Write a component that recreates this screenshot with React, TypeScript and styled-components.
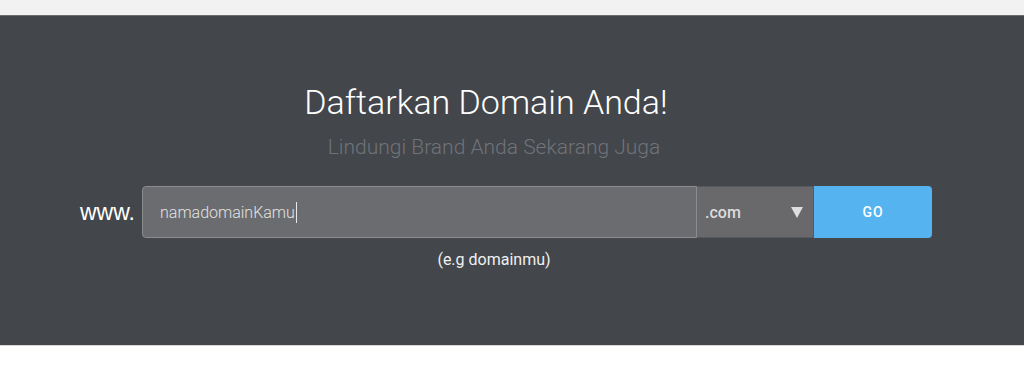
import React from 'react'
import styled, { createGlobalStyle } from 'styled-components'

const GlobalStyle = createGlobalStyle`
  html, body {
    margin: 0;
    padding: 0;
    background: #ffffff;
    font-family: Roboto, "Liberation Sans", sans-serif;
  }
`

const TopBar = styled.div`
  height: 15px;
  background: #f2f2f2;
  border-bottom: 1px solid #6a6b6e;
`

const Hero = styled.section`
  background: #43464b;
  height: 330px;
  border-bottom: 1px solid #d8d8d8;
  box-sizing: border-box;
  padding-top: 64px;
`

const Content = styled.div`
  width: 988px;
  display: flex;
  flex-direction: column;
  align-items: center;
`

const Title = styled.h1`
  margin: 0 16px 0 0;
  font-family: Roboto, "Liberation Sans", sans-serif;
  font-weight: 300;
  font-size: 34px;
  line-height: 44px;
  color: #ffffff;
`

const Subtitle = styled.p`
  margin: 10px 0 0;
  font-family: Roboto, "Liberation Sans", sans-serif;
  font-weight: 300;
  font-size: 21px;
  line-height: 26px;
  color: #707378;
`

const FormRow = styled.div`
  align-self: flex-start;
  margin: 26px 0 0 80px;
  display: flex;
  align-items: center;
`

const Prefix = styled.span`
  width: 62px;
  font-family: "Liberation Sans", sans-serif;
  font-size: 23px;
  color: #ffffff;
`

const Field = styled.div`
  width: 555px;
  height: 52px;
  box-sizing: border-box;
  background: #6b6c6f;
  border: 1px solid #8b8c8f;
  border-radius: 4px 0 0 4px;
  display: flex;
  align-items: center;
  padding-left: 17px;
  font-family: Roboto, "Liberation Sans", sans-serif;
  font-weight: 300;
  font-size: 16px;
  color: #e2e2e2;
`

const Caret = styled.span`
  display: inline-block;
  width: 1px;
  height: 21px;
  background: #e8e8e8;
  margin-left: 1px;
`

const Select = styled.div`
  width: 117px;
  height: 52px;
  box-sizing: border-box;
  background: #69696c;
  border: 1px solid #58595c;
  border-left: 0;
  display: flex;
  align-items: center;
  justify-content: space-between;
  padding: 0 10px 0 8px;
  font-family: Roboto, "Liberation Sans", sans-serif;
  font-weight: 500;
  font-size: 16px;
  color: #dcdcdc;
`

const Arrow = styled.span`
  width: 0;
  height: 0;
  border-left: 6px solid transparent;
  border-right: 6px solid transparent;
  border-top: 11px solid #dedede;
`

const GoButton = styled.button`
  width: 118px;
  height: 52px;
  border: 0;
  border-radius: 0 4px 4px 0;
  background: #55b4ef;
  color: #ffffff;
  font-family: Roboto, "Liberation Sans", sans-serif;
  font-weight: 500;
  font-size: 14px;
  letter-spacing: 1px;
  padding: 0;
`

const Hint = styled.div`
  margin-top: 12px;
  font-family: Roboto, "Liberation Sans", sans-serif;
  font-size: 16px;
  line-height: 19px;
  color: #f0f0f0;
`

export default function App() {
  return (
    <>
      <GlobalStyle />
      <TopBar />
      <Hero>
        <Content>
          <Title>Daftarkan Domain Anda!</Title>
          <Subtitle>Lindungi Brand Anda Sekarang Juga</Subtitle>
          <FormRow>
            <Prefix>www.</Prefix>
            <Field>
              namadomainKamu
              <Caret />
            </Field>
            <Select>
              .com
              <Arrow />
            </Select>
            <GoButton>GO</GoButton>
          </FormRow>
          <Hint>(e.g domainmu)</Hint>
        </Content>
      </Hero>
    </>
  )
}
